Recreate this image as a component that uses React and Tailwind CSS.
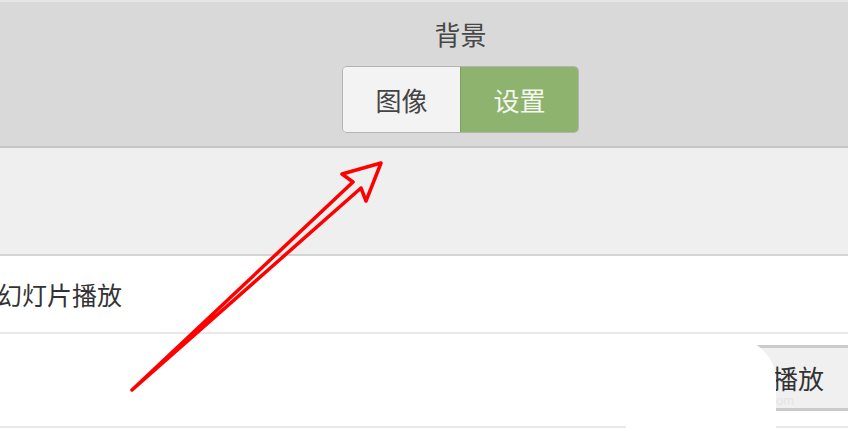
import React from "react";

export default function App() {
  const font = { fontFamily: '"Noto Sans CJK SC", "Noto Sans", sans-serif' };
  return (
    <div className="relative w-[848px] h-[432px] overflow-hidden bg-white" style={font}>
      {/* header */}
      <div className="h-[148px] pl-[73px] bg-[#d9d9d9] border-t-2 border-[#e6e6e6] border-b-2 border-b-[#c6c6c6] flex flex-col items-center">
        <div className="mt-[17px] h-[30px] flex items-center text-[26px] leading-none text-[#474747]">背景</div>
        <div className="mt-[17px] flex h-[67px] w-[237px] rounded-[5px] border border-[#b3b3b3] overflow-hidden">
          <div className="w-[117px] bg-[#f3f3f3] flex items-center justify-center text-[26px] text-[#444]">图像</div>
          <div className="flex-1 bg-[#8db36f] border-l border-[#7c9f60] flex items-center justify-center text-[26px] text-[#f5f7ee]">设置</div>
        </div>
      </div>
      {/* band */}
      <div className="h-[108px] bg-[#efefef] border-b-2 border-[#d4d4d4]" />
      {/* row 1 */}
      <div className="h-[78px] border-b-2 border-[#e8e8e8] flex items-center">
        <span className="ml-[-3px] text-[25px] text-[#333] leading-none">幻灯片播放</span>
      </div>
      {/* row 2 */}
      <div className="h-[94px] border-b-2 border-[#e8e8e8] flex items-start justify-end">
        <div className="mt-[11px] w-[160px] h-[66px] bg-[#f0f0f0] border-t-[3px] border-b-[3px] border-[#cbcbcb] flex items-center justify-start pl-[84px] relative">
          <span className="text-[26px] text-[#333] leading-none whitespace-nowrap">播放</span>
          <span className="absolute left-[88px] top-[46px] text-[13px] leading-none text-[#e4e4e4]" style={{ fontFamily: '"Liberation Sans", sans-serif' }}>om</span>
        </div>
      </div>
      {/* watermark blob */}
      <div className="absolute left-[626px] top-[337px] w-[150px] h-[100px] bg-white rounded-tl-[90px] rounded-tr-[45px]" />
      <div className="absolute left-[692px] top-[340px] w-[84px] h-[92px] bg-white rounded-tl-[40px] rounded-tr-[40px]" />
      {/* arrow */}
      <svg className="absolute left-0 top-0" width="848" height="432" viewBox="0 0 848 432">
        <polygon
          points="132,390 353,182 342,174 381,163 366,201 361,188 132,390"
          fill="none"
          stroke="#ff0000"
          strokeWidth="3.5"
          strokeLinejoin="round"
          strokeLinecap="round"
        />
      </svg>
    </div>
  );
}
